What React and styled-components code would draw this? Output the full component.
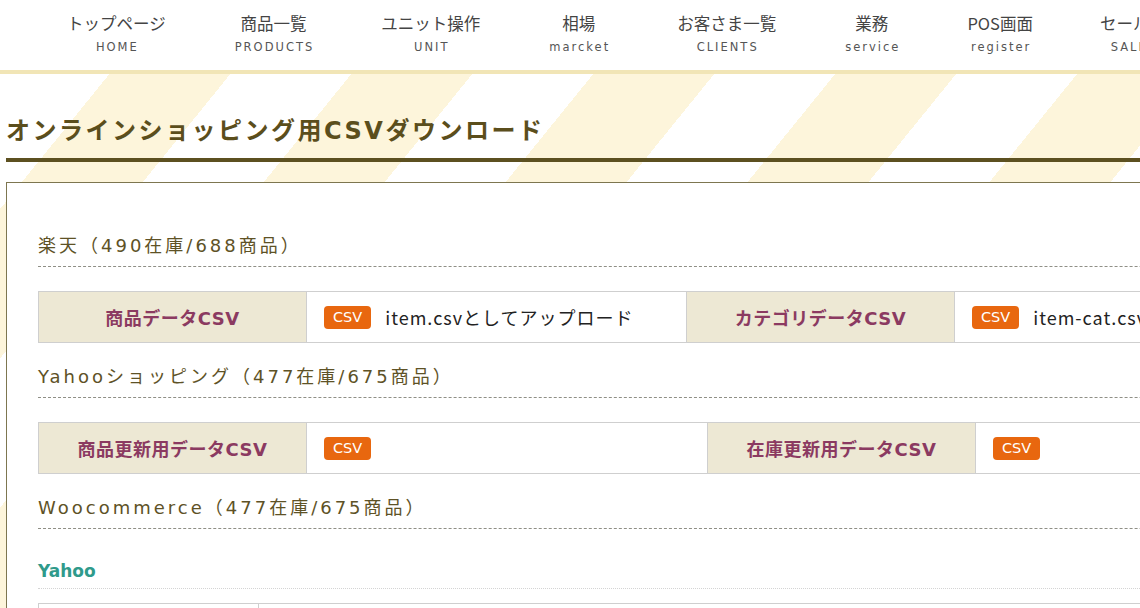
import React from 'react';
import styled, { createGlobalStyle } from 'styled-components';

const latin = `"DejaVu Sans", "Noto Sans CJK JP", sans-serif`;
const jp = `"Noto Sans CJK JP", "DejaVu Sans", sans-serif`;

const GlobalStyle = createGlobalStyle`
  html, body {
    margin: 0;
    padding: 0;
    overflow: hidden;
    background: #fff;
  }
  body {
    font-family: ${jp};
    color: #222;
  }
`;

const Page = styled.div`
  width: 1440px;
`;

const Header = styled.header`
  height: 70px;
  background: #fff;
  border-bottom: 4px solid #f1e5b6;
  display: flex;
  gap: 67px;
  padding-left: 67px;
`;

const NavItem = styled.a`
  display: flex;
  flex-direction: column;
  align-items: center;
  padding-top: 11px;
  text-decoration: none;
`;

const NavJp = styled.span`
  font-family: ${jp};
  font-size: 16.5px;
  line-height: 24px;
  color: #444;
`;

const NavEn = styled.span`
  font-family: ${latin};
  font-size: 11.5px;
  line-height: 16px;
  letter-spacing: 2px;
  padding-left: 2px;
  margin-top: 4px;
  color: #555;
`;

const Main = styled.main`
  min-height: 560px;
  padding: 40px 0 40px 6px;
  background: repeating-linear-gradient(
    129deg,
    #fff 0 85px,
    #fdf5db 85px 179px,
    #fff 179px 188px
  );
`;

const Title = styled.h1`
  margin: 0;
  padding-bottom: 10px;
  border-bottom: 4px solid #5c5020;
  font-family: ${latin};
  font-size: 24px;
  line-height: 34px;
  font-weight: bold;
  letter-spacing: 2.5px;
  color: #5b4e1c;
`;

const Box = styled.section`
  margin-top: 20px;
  background: #fff;
  border: 1px solid #7d7650;
  padding: 49px 31px 40px;
`;

const ShopHeading = styled.h2`
  margin: 0;
  padding-bottom: 6px;
  border-bottom: 1px dashed #8f8f86;
  font-family: ${latin};
  font-size: 18px;
  line-height: 28px;
  font-weight: normal;
  letter-spacing: 3px;
  color: #5e5226;
`;

const SubHeading = styled.h3`
  margin: 31px 0 0;
  padding-bottom: 6px;
  border-bottom: 1px dotted #d4d4d4;
  font-family: ${latin};
  font-size: 17px;
  line-height: 22px;
  font-weight: bold;
  color: #2f9a8b;
`;

const Table = styled.div`
  display: grid;
  grid-template-columns: ${p => p.$cols};
  margin: ${p => p.$top}px 0 20px;
  border-top: 1px solid #cfcfcf;
  border-left: 1px solid #cfcfcf;
`;

const HeadCell = styled.div`
  height: 50px;
  display: flex;
  align-items: center;
  justify-content: center;
  background: #ede8d4;
  border-right: 1px solid #cfcfcf;
  border-bottom: 1px solid #cfcfcf;
  font-family: ${latin};
  font-size: 18px;
  font-weight: bold;
  letter-spacing: 0.5px;
  color: #8b3a61;
`;

const DataCell = styled.div`
  height: 50px;
  display: flex;
  align-items: center;
  gap: 14px;
  padding-left: 17px;
  background: #fff;
  border-right: 1px solid #cfcfcf;
  border-bottom: 1px solid #cfcfcf;
  font-family: ${jp};
  font-size: 18px;
  letter-spacing: 1px;
  color: #222;
  white-space: nowrap;
`;

const Badge = styled.span`
  display: inline-block;
  height: 23px;
  padding: 0 9px;
  border-radius: 4px;
  background: #e8670f;
  color: #fff;
  font-family: ${latin};
  font-size: 14.5px;
  letter-spacing: 0;
  line-height: 23px;
`;

const navItems = [
  ['トップページ', 'HOME'],
  ['商品一覧', 'PRODUCTS'],
  ['ユニット操作', 'UNIT'],
  ['相場', 'marcket'],
  ['お客さま一覧', 'CLIENTS'],
  ['業務', 'service'],
  ['POS画面', 'register'],
  ['セールス', 'SALES'],
];

const shops = [
  {
    name: '楽天（490在庫/688商品）',
    cols: '268px 380px 268px 1fr',
    cells: [
      ['商品データCSV', 'item.csvとしてアップロード'],
      ['カテゴリデータCSV', 'item-cat.csvとしてアップロード'],
    ],
  },
  {
    name: 'Yahooショッピング（477在庫/675商品）',
    cols: '268px 401px 268px 1fr',
    cells: [
      ['商品更新用データCSV', ''],
      ['在庫更新用データCSV', ''],
    ],
  },
];

function CsvRow({ cols, cells }) {
  return (
    <Table $cols={cols} $top={24}>
      {cells.map(([label, note]) => (
        <React.Fragment key={label}>
          <HeadCell>{label}</HeadCell>
          <DataCell>
            <Badge>CSV</Badge>
            {note && <span>{note}</span>}
          </DataCell>
        </React.Fragment>
      ))}
    </Table>
  );
}

export default function App() {
  return (
    <Page>
      <GlobalStyle />
      <Header>
        {navItems.map(([ja, en]) => (
          <NavItem key={en} href="#">
            <NavJp>{ja}</NavJp>
            <NavEn>{en}</NavEn>
          </NavItem>
        ))}
      </Header>
      <Main>
        <Title>オンラインショッピング用CSVダウンロード</Title>
        <Box>
          {shops.map(shop => (
            <React.Fragment key={shop.name}>
              <ShopHeading>{shop.name}</ShopHeading>
              <CsvRow cols={shop.cols} cells={shop.cells} />
            </React.Fragment>
          ))}
          <ShopHeading>Woocommerce（477在庫/675商品）</ShopHeading>
          <SubHeading>Yahoo</SubHeading>
          <Table $cols="220px 1fr" $top={14}>
            <DataCell />
            <DataCell />
          </Table>
        </Box>
      </Main>
    </Page>
  );
}
